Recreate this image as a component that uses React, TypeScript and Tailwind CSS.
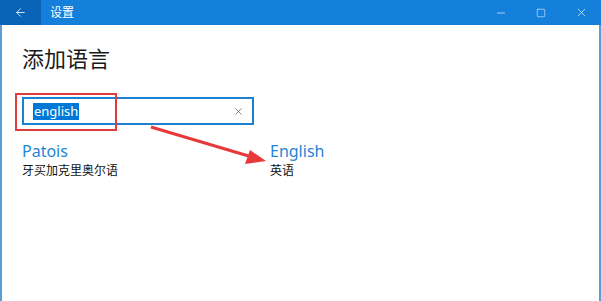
import { ArrowLeft, Minus, Square, X } from "lucide-react";

const font = "font-['Noto_Sans','Noto_Sans_CJK_SC',sans-serif]";

export default function App() {
  return (
    <main className={`relative w-[601px] h-[301px] bg-white flex flex-col overflow-hidden ${font}`}>
      {/* title bar */}
      <div className="h-[25px] bg-[#1480dc] flex items-center text-white shrink-0">
        <div className="w-[41px] h-full bg-[#0862b6] flex items-center justify-center">
          <ArrowLeft size={13} strokeWidth={1.5} />
        </div>
        <div className="ml-[9px] text-[12px] leading-none">设置</div>
        <div className="ml-auto flex h-full items-center">
          <div className="w-[40px] flex justify-center">
            <Minus size={12} strokeWidth={1.2} />
          </div>
          <div className="w-[40px] flex justify-center">
            <Square size={10} strokeWidth={1.3} />
          </div>
          <div className="w-[40px] flex justify-center">
            <X size={13} strokeWidth={1.2} />
          </div>
        </div>
      </div>

      {/* body */}
      <div className="flex-1 border-l-2 border-r-2 border-[#5b9bd6] pl-[20px] pt-[19px]">
        <h1 className="text-[22px] leading-[28px] text-[#1a1a1a] font-normal">添加语言</h1>

        <div className="mt-[25px] w-[232px] h-[28px] border-2 border-[#1d7fcf] flex items-center pl-[9px] pr-[8px]">
          <span className="bg-[#0078d7] text-white text-[13px] leading-[17px] px-[1px]">english</span>
          <X size={11} strokeWidth={1.5} className="ml-auto text-[#555]" />
        </div>

        <div className="mt-[16px] flex">
          <div className="w-[248px] flex flex-col gap-[2px]">
            <div className="text-[16px] leading-[20px] text-[#2385d6]">Patois</div>
            <div className="text-[12px] leading-[15px] text-[#111]">牙买加克里奥尔语</div>
          </div>
          <div className="flex flex-col gap-[2px]">
            <div className="text-[16px] leading-[20px] text-[#2385d6]">English</div>
            <div className="text-[12px] leading-[15px] text-[#111]">英语</div>
          </div>
        </div>
      </div>

      {/* annotation */}
      <div className="absolute left-[15px] top-[93px] w-[102px] h-[38px] border-2 border-[#e03c3c]" />
      <svg className="absolute left-0 top-0" width="601" height="301">
        <line x1="151" y1="127" x2="252" y2="157" stroke="#e8393a" strokeWidth="3" />
        <polygon points="266,161 245,164 250,150" fill="#e8393a" />
      </svg>
    </main>
  );
}
